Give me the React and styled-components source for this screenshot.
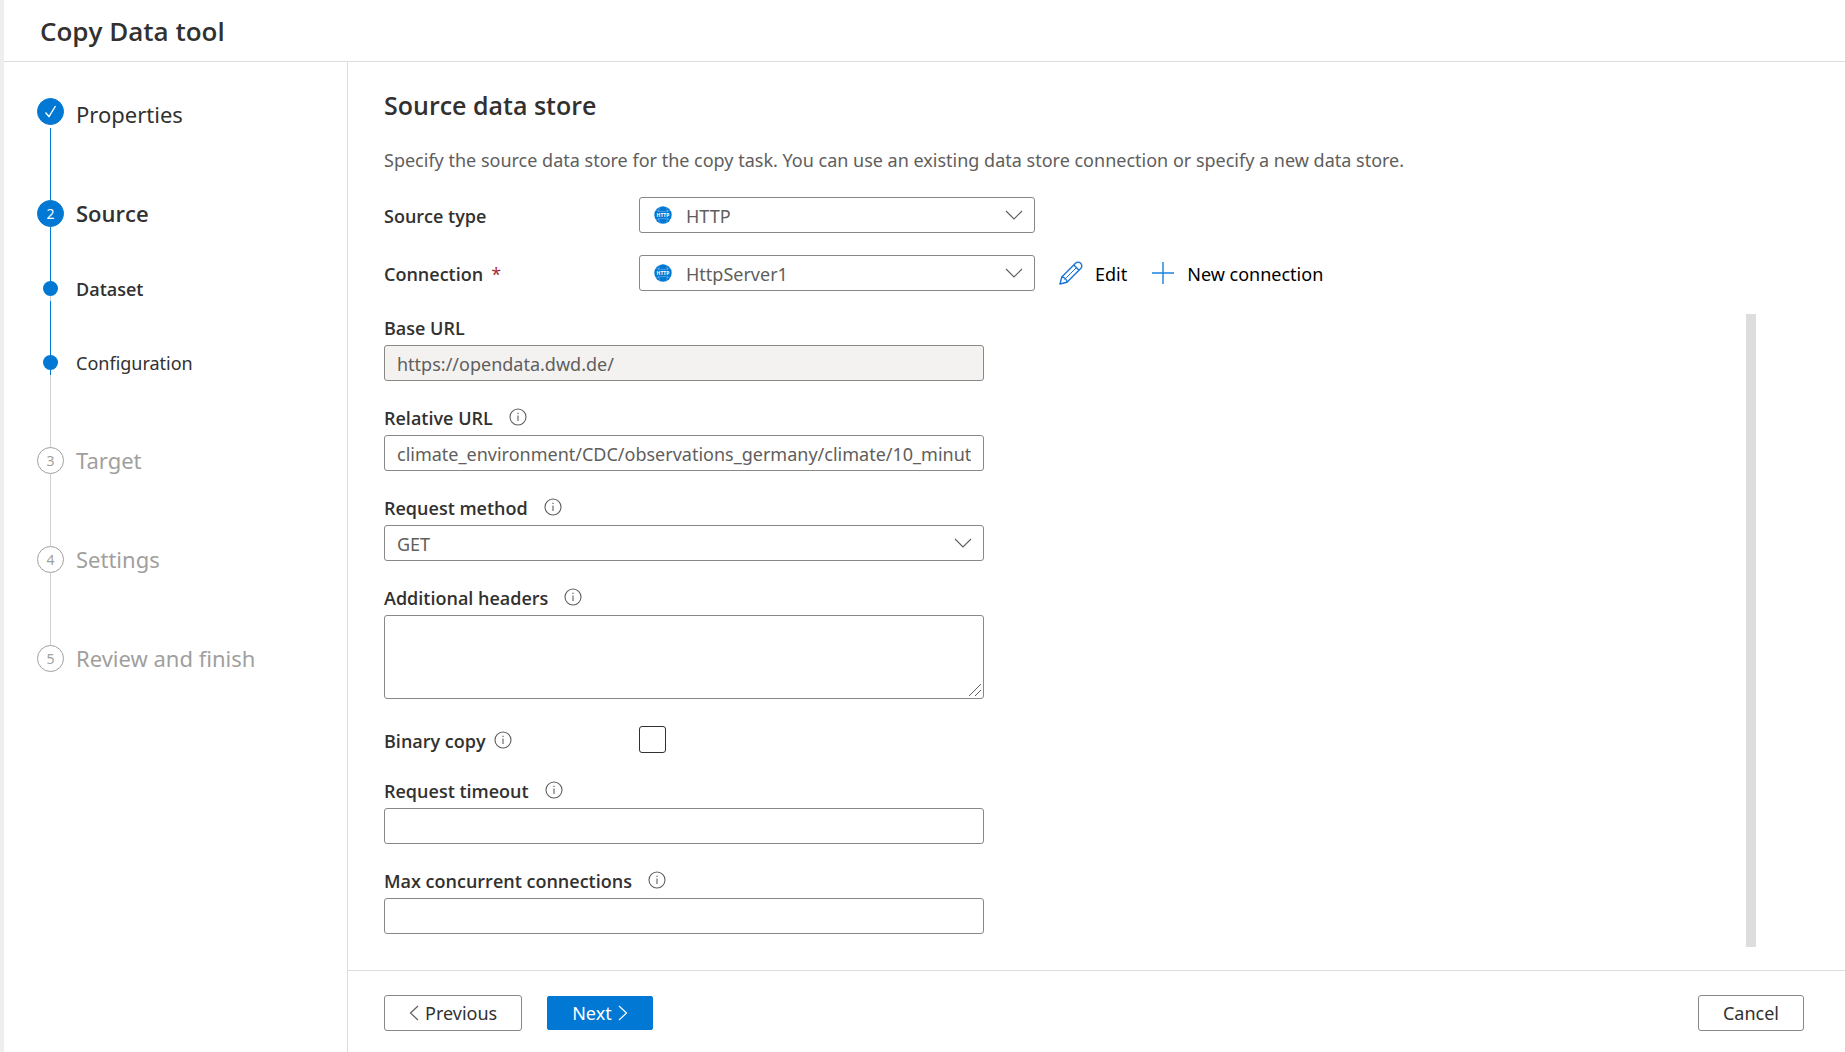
import React from "react";
import styled, { createGlobalStyle, css } from "styled-components";

const c = {
  text: "#323130",
  subtle: "#605e5c",
  muted: "#a19f9d",
  border: "#8a8886",
  line: "#dddddd",
  blue: "#0078d4",
};

const bodyFont = '"Noto Sans", "Open Sans", sans-serif';
const strongFont = '"Open Sans", "Noto Sans", sans-serif';

const strong = css`
  font-family: ${strongFont};
  font-weight: 600;
`;

const GlobalStyle = createGlobalStyle`
  *, *::before, *::after { box-sizing: border-box; }
  body {
    margin: 0;
    background: #fff;
    color: ${c.text};
    font-family: ${bodyFont};
    font-size: 18px;
    line-height: 24px;
  }
  button, input, select, textarea { font: inherit; color: inherit; margin: 0; }
`;

const Page = styled.div`
  min-height: 100vh;
  display: flex;
  flex-direction: column;
  border-left: 4px solid #eeeeee;
`;

const Header = styled.header`
  display: flex;
  align-items: center;
  height: 62px;
  padding: 0 36px;
  border-bottom: 1px solid ${c.line};
`;

const Title = styled.h1`
  ${strong}
  margin: 0;
  font-size: 26px;
  line-height: 32px;
`;

const Body = styled.div`
  flex: 1;
  display: flex;
`;

const Sidebar = styled.nav`
  flex: none;
  width: 344px;
  padding: 36px 33px;
  border-right: 1px solid ${c.line};
`;

const Steps = styled.ol`
  list-style: none;
  margin: 0;
  padding: 0;
`;

const Step = styled.li`
  display: flex;
  gap: 12px;
  height: ${(p) => p.$height}px;
`;

const Rail = styled.div`
  flex: none;
  width: 27px;
  display: flex;
  flex-direction: column;
  align-items: center;
`;

const Badge = styled.span`
  flex: none;
  display: flex;
  align-items: center;
  justify-content: center;
  width: 27px;
  height: 27px;
  border-radius: 50%;
  border: 1px solid ${(p) => (p.$active ? c.blue : c.muted)};
  background: ${(p) => (p.$active ? c.blue : "#fff")};
  color: ${(p) => (p.$active ? "#fff" : c.muted)};
  font-size: 14px;
  line-height: 20px;
`;

const Dot = styled.span`
  flex: none;
  width: 15px;
  height: 15px;
  border-radius: 50%;
  background: ${c.blue};
`;

const tones = { blue: c.blue, grey: "#d2d0ce", none: "transparent" };
const Segment = styled.span`
  width: 1px;
  flex: ${(p) => (p.$length ? `0 0 ${p.$length}px` : "1")};
  background: ${(p) => tones[p.$tone]};
`;

const StepLabel = styled.span`
  font-size: ${(p) => (p.$sub ? 18 : 22)}px;
  line-height: ${(p) => (p.$sub ? 16 : 27)}px;
  padding-top: ${(p) => (p.$done ? 3 : 0)}px;
  color: ${(p) => (p.$pending ? c.muted : c.text)};
  ${(p) => p.$current && strong}
`;

const Main = styled.main`
  flex: 1;
  min-width: 0;
  display: flex;
  flex-direction: column;
`;

const Content = styled.div`
  flex: 1;
  display: flex;
  flex-direction: column;
  padding: 26px 89px 23px 36px;
`;

const Heading = styled.h2`
  ${strong}
  margin: 0 0 26px;
  font-size: 25px;
  line-height: 34px;
`;

const Description = styled.p`
  margin: 0 0 25px;
  color: ${c.subtle};
`;

const SettingRow = styled.div`
  display: flex;
  align-items: center;
  height: 36px;
  margin-bottom: 22px;
`;

const RowLabel = styled.label`
  ${strong}
  flex: none;
  display: flex;
  align-items: center;
  gap: 8px;
  width: 255px;
  padding-top: 2px;
`;

const Required = styled.span`
  color: #a4262c;
  font-weight: 400;
`;

const SelectBox = styled.span`
  position: relative;
  display: block;
  flex: none;
  width: ${(p) => p.$width};
`;

const field = css`
  display: block;
  width: 100%;
  border: 1px solid ${c.border};
  border-radius: 3px;
  background: #fff;
  color: ${c.subtle};
  padding: 2px 12px 0;
  outline: none;
`;

const Select = styled.select`
  ${field}
  height: 36px;
  appearance: none;
  padding-left: ${(p) => (p.$icon ? 46 : 12)}px;
`;

const SelectIcon = styled.span`
  position: absolute;
  top: 9px;
  left: 15px;
  display: flex;
  pointer-events: none;
`;

const SelectArrow = styled.span`
  position: absolute;
  top: 13px;
  right: 12px;
  display: flex;
  pointer-events: none;
`;

const Input = styled.input`
  ${field}
  height: 36px;
  &:disabled {
    background: #f3f2f1;
  }
`;

const TextAreaBox = styled.div`
  position: relative;
`;

const TextArea = styled.textarea`
  ${field}
  height: 84px;
  resize: vertical;
  &::-webkit-resizer {
    display: none;
  }
`;

const Grip = styled.span`
  position: absolute;
  right: 2px;
  bottom: 2px;
  display: flex;
  pointer-events: none;
`;

const Actions = styled.div`
  display: flex;
  gap: 24px;
  margin-left: 24px;
`;

const LinkButton = styled.button`
  display: flex;
  align-items: center;
  gap: 12px;
  padding: 0;
  border: 0;
  background: none;
  color: #000;
`;

const LinkText = styled.span`
  padding-top: 2px;
`;

const ScrollArea = styled.div`
  flex: 1;
  display: flex;
  justify-content: space-between;
  margin-top: 1px;
`;

const ScrollBar = styled.div`
  flex: none;
  width: 10px;
  background: ${c.line};
`;

const Form = styled.form`
  flex: 0 1 600px;
  display: flex;
  flex-direction: column;
  gap: 24px;
  padding-top: 1px;
`;

const FieldLabel = styled.label`
  ${strong}
  display: flex;
  align-items: center;
  gap: 16px;
  margin-bottom: 4px;
  line-height: 26px;
`;

const CheckRow = styled.div`
  display: flex;
  align-items: center;
  padding: 3px 0 1px;
`;

const CheckBox = styled.input`
  appearance: none;
  width: 27px;
  height: 27px;
  border: 1px solid ${c.text};
  border-radius: 3px;
  background: #fff;
`;

const Footer = styled.footer`
  display: flex;
  align-items: center;
  gap: 25px;
  height: 82px;
  padding: 2px 41px 0 36px;
  border-top: 1px solid ${c.line};
`;

const Button = styled.button`
  display: flex;
  align-items: center;
  justify-content: center;
  gap: 6px;
  height: ${(p) => (p.$primary ? 34 : 36)}px;
  padding: 1px 24px 0;
  border: 1px solid ${(p) => (p.$primary ? c.blue : c.border)};
  border-radius: ${(p) => (p.$primary ? 2 : 3)}px;
  background: ${(p) => (p.$primary ? c.blue : "#fff")};
  color: ${(p) => (p.$primary ? "#fff" : c.text)};
  margin-left: ${(p) => (p.$end ? "auto" : "0")};
`;

const InfoSvg = styled.svg`
  flex: none;
  margin-bottom: 2px;
`;

const CheckMark = () => (
  <svg width="13" height="13" viewBox="0 0 13 13" fill="none" stroke="#fff" strokeWidth="1.4" aria-hidden="true">
    <path d="M1.5 7.5 5 11.5 11.5 1" />
  </svg>
);

const InfoIcon = () => (
  <InfoSvg width="18" height="18" viewBox="0 0 18 18" fill="none" stroke={c.subtle} aria-hidden="true">
    <circle cx="9" cy="9" r="8" strokeWidth="1.1" />
    <path d="M9 7.5v5.5" strokeWidth="1.1" />
    <path d="M9 4.8v1.3" strokeWidth="1.2" />
  </InfoSvg>
);

const Chevron = () => (
  <svg width="18" height="10" viewBox="0 0 18 10" fill="none" stroke={c.subtle} strokeWidth="1.1" aria-hidden="true">
    <path d="M1 1l8 8 8-8" />
  </svg>
);

const Arrow = ({ left }) => (
  <svg
    width="10"
    height="16"
    viewBox="0 0 10 16"
    fill="none"
    stroke={left ? c.subtle : "#fff"}
    strokeWidth="1.2"
    aria-hidden="true"
  >
    <path d={left ? "M9 1 1.5 8 9 15" : "M1 1l7.5 7L1 15"} />
  </svg>
);

const GripIcon = () => (
  <svg width="14" height="14" viewBox="0 0 14 14" fill="none" stroke={c.subtle} strokeWidth="1" aria-hidden="true">
    <path d="M1 13 13 1M7 13l6-6" />
  </svg>
);

const HttpIcon = () => (
  <svg width="18" height="18" viewBox="0 0 18 18" aria-hidden="true">
    <circle cx="9" cy="9" r="8.7" fill={c.blue} />
    <g fill="none" stroke="#8cc4f0" strokeWidth="0.5">
      <path d="M6 1.2C5 3 4.500 4.500 4.500 6M12 1.200c1 1.800 1.500 3.300 1.500 4.800M2.500 4.500c4 1.300 9 1.300 13 0" />
      <path d="M6 16.800C5 15 4.500 13.500 4.500 12M12 16.800c1-1.800 1.500-3.300 1.500-4.800M2.500 13.500c4-1.300 9-1.300 13 0" />
    </g>
    <rect x="1" y="6" width="16" height="6" fill={c.blue} />
    <text x="9" y="10.800" textAnchor="middle" fontSize="5" fontWeight="700" fill="#fff" fontFamily="Open Sans, sans-serif">
      HTTP
    </text>
  </svg>
);

const PencilIcon = () => (
  <svg
    width="24"
    height="24"
    viewBox="0 0 24 24"
    fill="none"
    stroke="#1a73d9"
    strokeWidth="1.400"
    strokeLinejoin="round"
    aria-hidden="true"
  >
    <path d="M1 23l1.800-7L16.500 2.300a3.600 3.600 0 0 1 5.200 5.200L8 21.200z" />
    <path d="M14.800 4l5.200 5.200M2.800 16c2.700.2 5 2.500 5.200 5.200" />
    <path d="M5.400 18.600 17.400 6.600" strokeWidth="1" />
  </svg>
);

const PlusIcon = () => (
  <svg width="24" height="24" viewBox="0 0 24 24" fill="none" stroke="#1a82dc" strokeWidth="1.4" aria-hidden="true">
    <path d="M12 1v22M1 12h22" />
  </svg>
);

const steps = [
  { label: "Properties", badge: <CheckMark />, state: "done", height: 102, rail: [["none", 3], ["blue"]] },
  { label: "Source", badge: "2", state: "current", height: 81, rail: [["blue"]] },
  { label: "Dataset", sub: true, state: "current", height: 74, rail: [["grey", 5], ["blue"]] },
  { label: "Configuration", sub: true, height: 92, rail: [["blue", 5], ["grey"]] },
  { label: "Target", badge: "3", state: "pending", height: 99, rail: [["grey"]] },
  { label: "Settings", badge: "4", state: "pending", height: 99, rail: [["grey"]] },
  { label: "Review and finish", badge: "5", state: "pending", height: 27, rail: [] },
];

function Dropdown({ id, value, icon, width }) {
  return (
    <SelectBox $width={width}>
      <Select id={id} $icon={!!icon} defaultValue={value}>
        <option>{value}</option>
      </Select>
      {icon && <SelectIcon>{icon}</SelectIcon>}
      <SelectArrow>
        <Chevron />
      </SelectArrow>
    </SelectBox>
  );
}

function Field({ id, label, info, children }) {
  return (
    <div>
      <FieldLabel htmlFor={id}>
        {label}
        {info && <InfoIcon />}
      </FieldLabel>
      {children}
    </div>
  );
}

export default function App() {
  return (
    <>
      <GlobalStyle />
      <Page>
        <Header>
          <Title>Copy Data tool</Title>
        </Header>
        <Body>
          <Sidebar aria-label="Steps">
            <Steps>
              {steps.map((s) => (
                <Step key={s.label} $height={s.height}>
                  <Rail>
                    {s.sub ? <Dot /> : <Badge $active={s.state !== "pending"}>{s.badge}</Badge>}
                    {s.rail.map(([tone, length], i) => (
                      <Segment key={i} $tone={tone} $length={length} />
                    ))}
                  </Rail>
                  <StepLabel
                    $sub={s.sub}
                    $done={s.state === "done"}
                    $current={s.state === "current"}
                    $pending={s.state === "pending"}
                  >
                    {s.label}
                  </StepLabel>
                </Step>
              ))}
            </Steps>
          </Sidebar>
          <Main>
            <Content>
              <Heading>Source data store</Heading>
              <Description>
                Specify the source data store for the copy task. You can use an existing data store connection or
                specify a new data store.
              </Description>
              <SettingRow>
                <RowLabel htmlFor="source-type">Source type</RowLabel>
                <Dropdown id="source-type" value="HTTP" icon={<HttpIcon />} width="396px" />
              </SettingRow>
              <SettingRow>
                <RowLabel htmlFor="connection">
                  Connection <Required>*</Required>
                </RowLabel>
                <Dropdown id="connection" value="HttpServer1" icon={<HttpIcon />} width="396px" />
                <Actions>
                  <LinkButton type="button">
                    <PencilIcon />
                    <LinkText>Edit</LinkText>
                  </LinkButton>
                  <LinkButton type="button">
                    <PlusIcon />
                    <LinkText>New connection</LinkText>
                  </LinkButton>
                </Actions>
              </SettingRow>
              <ScrollArea>
                <Form>
                  <Field id="base-url" label="Base URL">
                    <Input id="base-url" defaultValue="https://opendata.dwd.de/" disabled />
                  </Field>
                  <Field id="relative-url" label="Relative URL" info>
                    <Input
                      id="relative-url"
                      defaultValue="climate_environment/CDC/observations_germany/climate/10_minutes/"
                    />
                  </Field>
                  <Field id="method" label="Request method" info>
                    <Dropdown id="method" value="GET" width="100%" />
                  </Field>
                  <Field id="headers" label="Additional headers" info>
                    <TextAreaBox>
                      <TextArea id="headers" />
                      <Grip>
                        <GripIcon />
                      </Grip>
                    </TextAreaBox>
                  </Field>
                  <CheckRow>
                    <RowLabel htmlFor="binary">
                      Binary copy
                      <InfoIcon />
                    </RowLabel>
                    <CheckBox id="binary" type="checkbox" />
                  </CheckRow>
                  <Field id="timeout" label="Request timeout" info>
                    <Input id="timeout" />
                  </Field>
                  <Field id="max" label="Max concurrent connections" info>
                    <Input id="max" />
                  </Field>
                </Form>
                <ScrollBar />
              </ScrollArea>
            </Content>
            <Footer>
              <Button type="button">
                <Arrow left />
                Previous
              </Button>
              <Button type="button" $primary>
                Next
                <Arrow />
              </Button>
              <Button type="button" $end>
                Cancel
              </Button>
            </Footer>
          </Main>
        </Body>
      </Page>
    </>
  );
}
